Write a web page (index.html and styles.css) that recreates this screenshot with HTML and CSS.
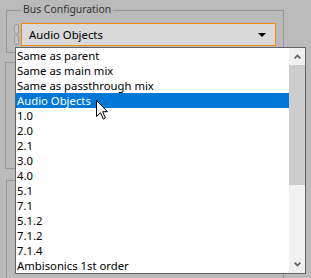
FILE: index.html
```html
<!DOCTYPE html>
<html>
<head>
	<title>Bus Configuration</title>
	<link rel="stylesheet" href="styles.css">
</head>
<body>
	<div class="panel">

		<fieldset class="group bus">
			<legend>Bus Configuration</legend>
			<div class="row">
				<div class="grip"><span></span><span></span></div>
				<div class="combo">
					<span>Audio Objects</span>
					<svg width="8" height="4" viewBox="0 0 8 4"><polygon points="0,0 8,0 4,4" fill="#000"/></svg>
				</div>
			</div>
		</fieldset>

		<div class="group box2"></div>
		<div class="group box3"></div>

		<!-- open dropdown list, drawn over the panel -->
		<div class="dropdown">
			<div class="items">
				<div class="item">Same as parent</div>
				<div class="item">Same as main mix</div>
				<div class="item">Same as passthrough mix</div>
				<div class="item selected">Audio Objects</div>
				<div class="item">1.0</div>
				<div class="item">2.0</div>
				<div class="item">2.1</div>
				<div class="item">3.0</div>
				<div class="item">4.0</div>
				<div class="item">5.1</div>
				<div class="item">7.1</div>
				<div class="item">5.1.2</div>
				<div class="item">7.1.2</div>
				<div class="item">7.1.4</div>
				<div class="item">Ambisonics 1st order</div>
			</div>
			<div class="scrollbar">
				<div class="sb-button">
					<svg width="7" height="5" viewBox="0 0 7 5"><polyline points="0.6,4.4 3.5,1.4 6.4,4.4" fill="none" stroke="#606060" stroke-width="1.7"/></svg>
				</div>
				<div class="sb-thumb"></div>
				<div class="sb-track"></div>
				<div class="sb-button">
					<svg width="7" height="5" viewBox="0 0 7 5"><polyline points="0.6,0.6 3.5,3.6 6.4,0.6" fill="none" stroke="#606060" stroke-width="1.7"/></svg>
				</div>
			</div>
		</div>

		<!-- mouse pointer -->
		<svg class="cursor" width="12" height="20" viewBox="0 0 12 20">
			<path d="M0.5,0.5 V16.5 L4.5,12.7 L7.3,19 L9.4,18 L6.7,11.7 H11.5 Z" fill="#fff" stroke="#000" stroke-width="1" stroke-linejoin="miter"/>
		</svg>

	</div>
</body>
</html>
```

FILE: styles.css
```css
body {
	margin: 0;
	background-color: #bababa;
	font-family: "Noto Sans", "Open Sans", sans-serif;
}

.panel {
	position: relative;
	width: 311px;
	height: 278px;
	padding-top: 3px;
	box-sizing: border-box;
	overflow: hidden;
}

.group {
	box-sizing: border-box;
	border: 1px solid #979797;
}

fieldset.bus {
	margin: 0 0 0 6px;
	width: 278px;
	padding: 5px 7px 6px 7px;
	min-width: 0;
}

fieldset.bus legend {
	margin-left: 7px;
	padding: 0 2px 3px 2px;
	font-size: 10.4px;
	line-height: 12px;
	color: #333;
}

.row {
	display: flex;
	gap: 2px;
	height: 23px;
}

.grip {
	display: flex;
	flex-direction: column;
	gap: 1px;
	width: 5px;
	padding: 1px 0;
	box-sizing: border-box;
}

.grip span {
	flex: 1;
	border: 1px solid #9c9c9c;
	border-radius: 2px;
	background-color: #c6c6c6;
}

.combo {
	display: flex;
	align-items: center;
	justify-content: space-between;
	width: 255px;
	box-sizing: border-box;
	padding: 0 9px 0 7px;
	border: 1px solid #f28a0c;
	background-color: #d9d9d9;
	font-size: 11.3px;
	line-height: 21px;
	color: #000;
}

.combo svg {
	display: block;
}

.box2 {
	margin: 9px 0 0 5px;
	width: 279px;
	height: 107px;
}

.box3 {
	margin: 11px 0 0 6px;
	width: 278px;
	height: 120px;
}

.dropdown {
	position: absolute;
	left: 15px;
	top: 47px;
	width: 291px;
	height: 227px;
	box-sizing: border-box;
	display: flex;
	border: 1px solid #646464;
	background-color: #fff;
}

.items {
	flex: 1;
}

.item {
	height: 15px;
	line-height: 15px;
	padding-left: 1px;
	font-size: 11.3px;
	color: #000;
	white-space: nowrap;
}

.item.selected {
	background-color: #0078d7;
	color: #fff;
}

.scrollbar {
	display: flex;
	flex-direction: column;
	width: 16px;
	background-color: #f0f0f0;
}

.sb-button {
	display: flex;
	align-items: center;
	justify-content: center;
	height: 17px;
}

.sb-button svg {
	display: block;
}

.sb-thumb {
	height: 120px;
	background-color: #cdcdcd;
}

.sb-track {
	flex: 1;
}

.cursor {
	position: absolute;
	left: 96px;
	top: 100px;
}
```
